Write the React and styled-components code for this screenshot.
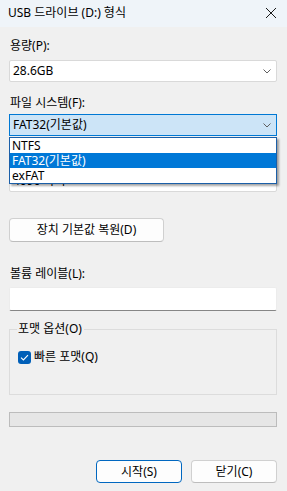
import styled, { createGlobalStyle } from "styled-components";

const GlobalStyle = createGlobalStyle`
  html, body {
    margin: 0;
    padding: 0;
    background: #f0f0f0;
  }
  * {
    box-sizing: border-box;
  }
`;

const FONT = `"Noto Sans", "Noto Sans CJK KR", sans-serif`;

const Window = styled.div`
  width: 287px;
  height: 491px;
  background: #f0f0f0;
  font-family: ${FONT};
  font-size: 12px;
  color: #000;
  display: flex;
  flex-direction: column;
  overflow: hidden;
`;

const TitleBar = styled.div`
  height: 27px;
  flex-shrink: 0;
  background: #eff4f9;
  display: flex;
  align-items: center;
  justify-content: space-between;
  padding: 0 8px 1px 8px;
`;

const Title = styled.span`
  font-size: 12px;
  line-height: 16px;
`;

const CloseButton = styled.button`
  border: 0;
  background: none;
  padding: 0;
  width: 14px;
  height: 14px;
  display: flex;
  align-items: center;
  justify-content: center;
  margin-right: 1px;
`;

const Body = styled.div`
  position: relative;
  display: flex;
  flex-direction: column;
  padding: 0 10px 0 9px;
`;

const Label = styled.div`
  line-height: 16px;
  height: 16px;
  margin-top: ${(p) => p.$top}px;
  padding-left: 1px;
  white-space: nowrap;
`;

const Select = styled.div`
  margin-top: ${(p) => p.$top}px;
  height: 22px;
  display: flex;
  align-items: center;
  justify-content: space-between;
  padding: 0 5px 0 3px;
  background: ${(p) => (p.$focused ? "#cce4f7" : "#ffffff")};
  border: 1px solid ${(p) => (p.$focused ? "#0078d4" : "#d9d9d9")};
  border-radius: ${(p) => (p.$focused ? "0" : "2px")};
  line-height: 16px;
`;

const Chevron = () => (
  <svg width="8" height="5" viewBox="0 0 8 5">
    <path d="M0.5 0.5 L4 4 L7.5 0.5" fill="none" stroke="#606060" strokeWidth="1" />
  </svg>
);

const DropList = styled.ul`
  position: absolute;
  top: 110px;
  left: 9px;
  width: 268px;
  margin: 0;
  padding: 0;
  list-style: none;
  background: #fff;
  border: 1px solid #1b5fa8;
  box-shadow: 2px 2px 2px rgba(0, 0, 0, 0.35);
  z-index: 2;
`;

const Option = styled.li`
  height: 15px;
  line-height: 15px;
  padding-left: 2px;
  background: ${(p) => (p.$selected ? "#0078d7" : "#fff")};
  color: ${(p) => (p.$selected ? "#fff" : "#000")};
`;

const Button = styled.button`
  font-family: ${FONT};
  font-size: 12px;
  color: #000;
  height: ${(p) => p.$h || 24}px;
  width: ${(p) => p.$w}px;
  margin-top: ${(p) => p.$top || 0}px;
  padding: 0;
  background: #fdfdfd;
  border: 1px solid ${(p) => (p.$primary ? "#0067c0" : "#d0d0d0")};
  border-bottom-color: ${(p) => (p.$primary ? "#0067c0" : "#bdbdbd")};
  border-radius: 4px;
  line-height: 16px;
`;

const TextInput = styled.div`
  margin-top: 5px;
  height: 24px;
  background: #fff;
  border: 1px solid #ececec;
  border-bottom: 1px solid #868686;
  border-radius: 2px;
`;

const Group = styled.fieldset`
  margin: 10px 0 0 0;
  padding: 12px 8px 0 8px;
  height: 74px;
  border: 1px solid #dcdcdc;
  border-radius: 0;
`;

const Legend = styled.legend`
  padding: 0 2px 0 1px;
  line-height: 16px;
  margin-left: -1px;
`;

const CheckRow = styled.label`
  display: flex;
  align-items: center;
  gap: 3px;
  line-height: 16px;
`;

const CheckBox = styled.span`
  width: 13px;
  height: 13px;
  border-radius: 3px;
  background: #005fb8;
  display: flex;
  align-items: center;
  justify-content: center;
`;

const Progress = styled.div`
  margin-top: 17px;
  height: 15px;
  background: #e6e6e6;
  border: 1px solid #bcbcbc;
`;

const Footer = styled.div`
  display: flex;
  justify-content: flex-end;
  gap: 9px;
  margin-top: 33px;
`;

function App() {
  return (
    <>
      <GlobalStyle />
      <Window>
        <TitleBar>
          <Title>USB 드라이브 (D:) 형식</Title>
          <CloseButton aria-label="닫기">
            <svg width="12" height="12" viewBox="0 0 12 12">
              <path d="M1 1 L11 11 M11 1 L1 11" stroke="#1a1a1a" strokeWidth="1" fill="none" />
            </svg>
          </CloseButton>
        </TitleBar>

        <Body>
          <Label $top={11}>용량(P):</Label>
          <Select $top={6}>
            <span>28.6GB</span>
            <Chevron />
          </Select>

          <Label $top={13}>파일 시스템(F):</Label>
          <Select $top={3} $focused>
            <span>FAT32(기본값)</span>
            <Chevron />
          </Select>

          <Label $top={14}>할당 단위 크기(A):</Label>
          <Select $top={4}>
            <span>4096 바이트</span>
            <Chevron />
          </Select>

          <DropList>
            <Option>NTFS</Option>
            <Option $selected>FAT32(기본값)</Option>
            <Option>exFAT</Option>
          </DropList>

          <Button $w={155} $top={26}>
            장치 기본값 복원(D)
          </Button>

          <Label $top={24}>볼륨 레이블(L):</Label>
          <TextInput />

          <Group>
            <Legend>포맷 옵션(O)</Legend>
            <CheckRow>
              <CheckBox>
                <svg width="9" height="7" viewBox="0 0 9 7">
                  <path d="M1 3.6 L3.4 6 L8 1.2" stroke="#fff" strokeWidth="1.1" fill="none" />
                </svg>
              </CheckBox>
              빠른 포맷(Q)
            </CheckRow>
          </Group>

          <Progress />

          <Footer>
            <Button $w={86} $h={23} $primary>
              시작(S)
            </Button>
            <Button $w={86} $h={23}>
              닫기(C)
            </Button>
          </Footer>
        </Body>
      </Window>
    </>
  );
}

export default App;
